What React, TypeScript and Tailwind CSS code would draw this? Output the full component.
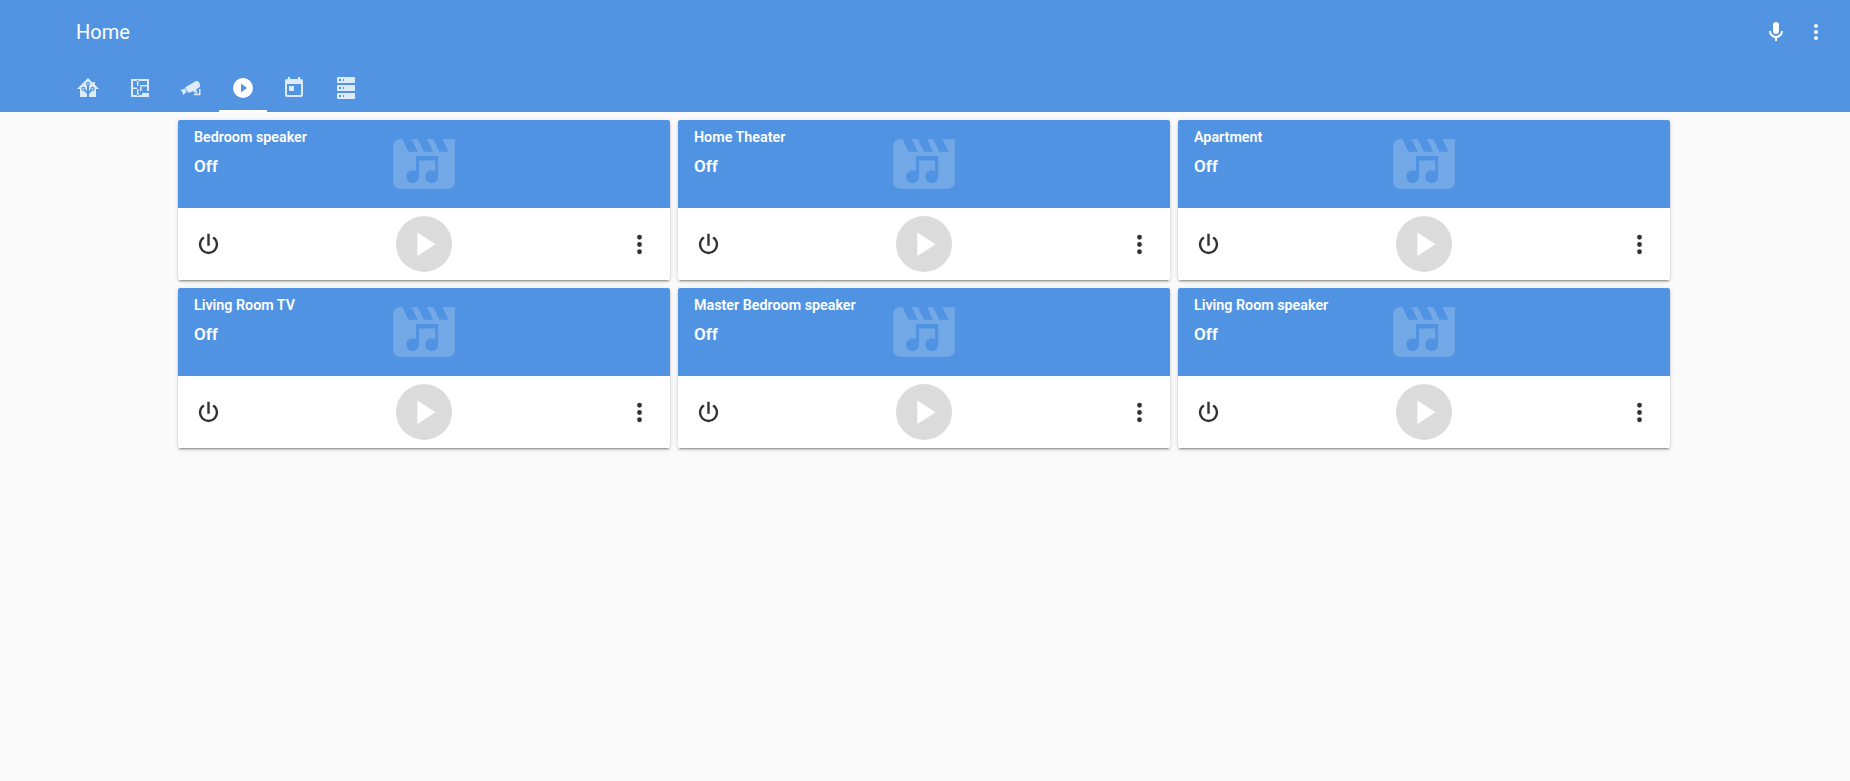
import type { ReactNode } from "react";

const mdi = {
  home: "M21.8,13H20V21H13V17.67L15.79,14.88L16.5,15C17.66,15 18.6,14.06 18.6,12.9C18.6,11.74 17.66,10.8 16.5,10.8A2.1,2.1 0 0,0 14.4,12.9L14.5,13.61L13,15.13V9.65C13.66,9.29 14.1,8.6 14.1,7.8A2.1,2.1 0 0,0 12,5.7A2.1,2.1 0 0,0 9.9,7.8C9.9,8.6 10.34,9.29 11,9.65V15.13L9.5,13.61L9.6,12.9A2.1,2.1 0 0,0 7.5,10.8A2.1,2.1 0 0,0 5.4,12.9A2.1,2.1 0 0,0 7.5,15L8.21,14.88L11,17.67V21H4V13H2.25C1.83,13 1.42,13 1.42,12.79C1.43,12.57 1.85,12.15 2.28,11.72L11,3C11.33,2.67 11.67,2.33 12,2.33C12.33,2.33 12.67,2.67 13,3L17,7V6H19V9L21.78,11.78C22.18,12.18 22.59,12.59 22.6,12.8C22.6,13 22.2,13 21.8,13M7.5,12A0.9,0.9 0 0,1 8.4,12.9A0.9,0.9 0 0,1 7.5,13.8A0.9,0.9 0 0,1 6.6,12.9A0.9,0.9 0 0,1 7.5,12M16.5,12C17,12 17.4,12.4 17.4,12.9C17.4,13.4 17,13.8 16.5,13.8A0.9,0.9 0 0,1 15.6,12.9A0.9,0.9 0 0,1 16.5,12M12,6.9C12.5,6.9 12.9,7.3 12.9,7.8C12.9,8.3 12.5,8.7 12,8.7C11.5,8.7 11.1,8.3 11.1,7.8C11.1,7.3 11.5,6.9 12,6.9Z",
  floorplan:
    "M3,3H21V15H19V5H5V19H19V17H21V21H3ZM9,4V10H10.5V4ZM9,13V20H10.5V13ZM4,11.5H9V13H4ZM12,9H20V10.5H12ZM12,10V15H13.5V10ZM14,17H20V19H14Z",
  cctv: "M16.5,5.2C17.5,4.8 19,5 20,6L21,9C21.2,10.5 20.5,11.5 19,12.3L17,13.5L18.5,16.8C17,17 15,16.5 14,15L11,16.5C10,17 9.2,16.8 8.7,16L6.5,12.5C6.2,11.5 6.6,11 7.5,10.5ZM1.5,14L6,12.5L7.5,16L4,19L3.5,16ZM15,17.6H20V13H21.5V19.2H15Z",
  playCircle:
    "M10,16.5V7.5L16,12M12,2A10,10 0 0,0 2,12A10,10 0 0,0 12,22A10,10 0 0,0 22,12A10,10 0 0,0 12,2Z",
  calendar:
    "M7,10H12V15H7M19,19H5V8H19M19,3H18V1H16V3H8V1H6V3H5C3.89,3 3,3.9 3,5V19A2,2 0 0,0 5,21H19A2,2 0 0,0 21,19V5A2,2 0 0,0 19,3Z",
  server:
    "M4,1H20A1,1 0 0,1 21,2V6A1,1 0 0,1 20,7H4A1,1 0 0,1 3,6V2A1,1 0 0,1 4,1M4,9H20A1,1 0 0,1 21,10V14A1,1 0 0,1 20,15H4A1,1 0 0,1 3,14V10A1,1 0 0,1 4,9M4,17H20A1,1 0 0,1 21,18V22A1,1 0 0,1 20,23H4A1,1 0 0,1 3,22V18A1,1 0 0,1 4,17M9,5H10V3H9V5M9,13H10V11H9V13M9,21H10V19H9V21M5,3V5H7V3H5M5,11V13H7V11H5M5,19V21H7V19H5Z",
  mic: "M12,2A3,3 0 0,1 15,5V11A3,3 0 0,1 12,14A3,3 0 0,1 9,11V5A3,3 0 0,1 12,2M19,11C19,14.53 16.39,17.44 13,17.93V21H11V17.93C7.61,17.44 5,14.53 5,11H7A5,5 0 0,0 12,16A5,5 0 0,0 17,11H19Z",
  dots: "M12,16A2,2 0 0,1 14,18A2,2 0 0,1 12,20A2,2 0 0,1 10,18A2,2 0 0,1 12,16M12,10A2,2 0 0,1 14,12A2,2 0 0,1 12,14A2,2 0 0,1 10,12A2,2 0 0,1 12,10M12,4A2,2 0 0,1 14,6A2,2 0 0,1 12,8A2,2 0 0,1 10,6A2,2 0 0,1 12,4Z",
  power:
    "M16.56,5.44L15.11,6.89C16.84,7.94 18,9.83 18,12A6,6 0 0,1 12,18A6,6 0 0,1 6,12C6,9.83 7.16,7.94 8.88,6.88L7.44,5.44C5.36,6.88 4,9.28 4,12A8,8 0 0,0 12,20A8,8 0 0,0 20,12C20,9.28 18.64,6.88 16.56,5.44M13,3H11V13H13",
  play: "M8,5.14V19.14L19,12.14L8,5.14Z",
  movie:
    "M18,4L20,8H17L15,4H13L15,8H12L10,4H8L10,8H7L5,4H4A2,2 0 0,0 2,6V18A2,2 0 0,0 4,20H20A2,2 0 0,0 22,18V4H18Z",
  note: "M9.4,9.4H16.6V16.1A2.1,2.1 0 1,1 15.6,14.31V10.9H10.4V16.1A2.1,2.1 0 1,1 9.4,14.31Z",
};

function Icon({ d, className }: { d: string; className: string }) {
  return (
    <svg viewBox="0 0 24 24" className={className} fill="currentColor">
      <path d={d} />
    </svg>
  );
}

function Tab({ children, active }: { children: ReactNode; active?: boolean }) {
  return (
    <div className="flex w-[51.5px] justify-center">
      <div
        className={`flex h-12 w-12 items-center justify-center border-b-2 pt-[2px] ${
          active ? "border-white text-white" : "border-transparent text-white/80"
        }`}
      >
        {children}
      </div>
    </div>
  );
}

const players = [
  "Bedroom speaker",
  "Home Theater",
  "Apartment",
  "Living Room TV",
  "Master Bedroom speaker",
  "Living Room speaker",
];

function PlayerCard({ name }: { name: string }) {
  return (
    <div className="h-40 overflow-hidden rounded-[2px] bg-white shadow-[0_2px_2px_rgba(0,0,0,0.14),0_1px_5px_rgba(0,0,0,0.12),0_3px_1px_-2px_rgba(0,0,0,0.2)]">
      <div className="relative h-[88px] bg-[#5093e2] px-4 pt-[7px] text-white">
        <div className="text-[14.3px] font-semibold leading-5">{name}</div>
        <div className="mt-[7px] text-[17px] font-semibold leading-6">Off</div>
        <svg
          viewBox="0 0 24 24"
          className="absolute top-[7px] left-[209px] h-[74px] w-[74px]"
        >
          <path d={mdi.movie} fill="#ffffff" fillOpacity="0.2" />
          <path d={mdi.note} fill="#5093e2" />
        </svg>
      </div>
      <div className="flex h-[72px] items-center justify-between px-4 text-[#333]">
        <Icon d={mdi.power} className="h-[29px] w-[29px]" />
        <div className="flex h-14 w-14 items-center justify-center rounded-full bg-[#dbdbdb] text-white">
          <Icon d={mdi.play} className="h-10 w-10" />
        </div>
        <Icon d={mdi.dots} className="h-[29px] w-[29px]" />
      </div>
    </div>
  );
}

export default function App() {
  return (
    <div className="min-h-[781px] bg-[#fafafa] font-['Roboto',sans-serif]">
      <header className="h-28 bg-[#5294e2] text-white">
        <div className="flex h-16 items-center pr-[14px] pl-[76px]">
          <div className="flex-1 text-xl font-normal">Home</div>
          <div className="flex h-10 w-10 items-center justify-center">
            <Icon d={mdi.mic} className="h-6 w-6" />
          </div>
          <div className="flex h-10 w-10 items-center justify-center">
            <Icon d={mdi.dots} className="h-6 w-6" />
          </div>
        </div>
        <div className="flex pl-[62.5px]">
          <Tab>
            <Icon d={mdi.home} className="h-6 w-6" />
          </Tab>
          <Tab>
            <Icon d={mdi.floorplan} className="h-6 w-6" />
          </Tab>
          <Tab>
            <Icon d={mdi.cctv} className="h-6 w-6" />
          </Tab>
          <Tab active>
            <Icon d={mdi.playCircle} className="h-6 w-6" />
          </Tab>
          <Tab>
            <Icon d={mdi.calendar} className="h-6 w-6" />
          </Tab>
          <Tab>
            <Icon d={mdi.server} className="h-6 w-6" />
          </Tab>
        </div>
      </header>
      <main className="ml-[178px] grid w-[1492px] grid-cols-3 gap-2 pt-2">
        {players.map((name) => (
          <PlayerCard key={name} name={name} />
        ))}
      </main>
    </div>
  );
}
